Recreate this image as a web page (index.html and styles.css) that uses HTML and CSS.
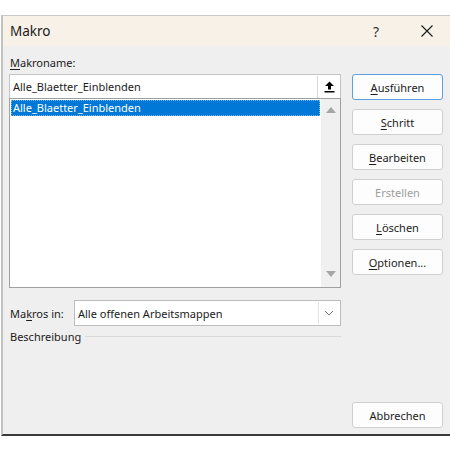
FILE: index.html
```html
<!DOCTYPE html>
<html lang="de">
<head>
<meta charset="utf-8">
<title>Makro</title>
<link rel="stylesheet" href="styles.css">
</head>
<body>
<div class="dialog">
  <div class="titlebar">
    <span class="title">Makro</span>
    <span class="help">?</span>
    <svg class="close" width="12" height="12" viewBox="0 0 12 12"><path d="M0.5 0.5 L11.5 11.5 M11.5 0.5 L0.5 11.5" stroke="#1a1a1a" stroke-width="1.1" fill="none"/></svg>
  </div>
  <div class="content">
    <div class="left">
      <div class="label"><u>M</u>akroname:</div>
      <div class="namebox">
        <span class="nametext">Alle_Blaetter_Einblenden</span>
        <span class="upbtn">
          <svg width="11" height="12" viewBox="0 0 11 12"><path d="M5.5 0.5 L10 5 L7 5 L7 8.5 L4 8.5 L4 5 L1 5 Z" fill="#000"/><rect x="0.5" y="10" width="10" height="1.5" fill="#000"/></svg>
        </span>
      </div>
      <div class="listbox">
        <div class="items">
          <div class="item selected">Alle_Blaetter_Einblenden</div>
        </div>
        <div class="scrollbar">
          <svg width="10" height="6" viewBox="0 0 10 6"><path d="M5 0 L10 6 L0 6 Z" fill="#a6a6a6"/></svg>
          <svg width="10" height="6" viewBox="0 0 10 6"><path d="M0 0 L10 0 L5 6 Z" fill="#a6a6a6"/></svg>
        </div>
      </div>
      <div class="inrow">
        <span class="inlabel">Ma<u>k</u>ros in:</span>
        <div class="select">
          <span class="seltext">Alle offenen Arbeitsmappen</span>
          <span class="selbtn">
            <svg width="10" height="6" viewBox="0 0 10 6"><path d="M1 1 L5 5 L9 1" stroke="#777" stroke-width="1" fill="none"/></svg>
          </span>
        </div>
      </div>
      <div class="desc">
        <span>Beschreibung</span>
        <span class="rule"></span>
      </div>
    </div>
    <div class="right">
      <button class="btn default"><u>A</u>usführen</button>
      <button class="btn"><u>S</u>chritt</button>
      <button class="btn"><u>B</u>earbeiten</button>
      <button class="btn disabled">Erstellen</button>
      <button class="btn"><u>L</u>öschen</button>
      <button class="btn"><u>O</u>ptionen...</button>
      <button class="btn cancel">Abbrechen</button>
    </div>
  </div>
</div>
</body>
</html>
```

FILE: styles.css
```css
html, body {
  margin: 0;
  padding: 0;
  background: #ffffff;
}
body {
  font-family: "Noto Sans", "Open Sans", sans-serif;
  font-size: 11px;
  color: #1b1b1b;
}
.dialog {
  margin-top: 15px;
  margin-left: 1px;
  width: 449px;
  height: 421px;
  box-sizing: border-box;
  border-top: 1px solid #c8c8c8;
  border-left: 2px solid #c2c2c2;
  border-bottom: 2px solid #3a3a3a;
  background: #efefef;
  display: flex;
  flex-direction: column;
}
.titlebar {
  height: 30px;
  background: #f8f1e8;
  display: flex;
  align-items: center;
  padding-left: 7px;
}
.title {
  font-size: 13.5px;
  flex: 1;
}
.help {
  font-size: 14px;
  color: #333;
  margin-right: 42px;
}
.close {
  margin-right: 17px;
}
.content {
  flex: 1;
  display: flex;
  gap: 11px;
  padding: 8px 5px 6px 6px;
}
.left {
  width: 332px;
  display: flex;
  flex-direction: column;
}
.label {
  height: 18px;
  line-height: 18px;
  padding-left: 1px;
  margin-bottom: 2px;
}
u { text-decoration-thickness: 1px; text-underline-offset: 2px; }
.namebox {
  height: 24px;
  box-sizing: border-box;
  border: 1px solid #c4c4c4;
  border-bottom: none;
  background: #fff;
  display: flex;
  align-items: center;
}
.nametext {
  flex: 1;
  padding-left: 3px;
}
.upbtn {
  width: 22px;
  height: 22px;
  border-left: 1px solid #d6d6d6;
  display: flex;
  align-items: center;
  justify-content: center;
}
.listbox {
  height: 190px;
  box-sizing: border-box;
  border: 1px solid #a0a0a0;
  background: #fff;
  display: flex;
}
.items {
  flex: 1;
  padding: 1px;
}
.item {
  height: 16px;
  line-height: 16px;
  padding-left: 2px;
}
.item.selected {
  background: #0078d7;
  color: #fff;
  outline: 1px dotted #7fb7e8;
  outline-offset: -1px;
}
.scrollbar {
  width: 19px;
  background: #f0f0f0;
  display: flex;
  flex-direction: column;
  justify-content: space-between;
  align-items: center;
  padding: 8px 0 10px;
}
.inrow {
  margin-top: 12px;
  display: flex;
  align-items: center;
  gap: 10px;
  height: 26px;
}
.inlabel {
  padding-left: 1px;
  width: 54px;
  white-space: nowrap;
}
.select {
  flex: 1;
  height: 26px;
  box-sizing: border-box;
  border: 1px solid #bdbdbd;
  background: #fff;
  display: flex;
  align-items: center;
}
.seltext {
  flex: 1;
  padding-left: 3px;
}
.selbtn {
  width: 20px;
  height: 22px;
  margin-right: 1px;
  border-left: 1px solid #e2e2e2;
  display: flex;
  align-items: center;
  justify-content: center;
}
.desc {
  margin-top: 2px;
  display: flex;
  align-items: center;
  gap: 4px;
  padding-left: 1px;
  height: 16px;
}
.rule {
  flex: 1;
  height: 1px;
  background: #d8d8d8;
}
.right {
  width: 91px;
  display: flex;
  flex-direction: column;
  gap: 9px;
  padding-top: 20px;
}
.btn {
  height: 26px;
  width: 91px;
  box-sizing: border-box;
  border: 1px solid #d0d0d0;
  border-radius: 3px;
  background: #fdfdfd;
  font-family: inherit;
  font-size: 11px;
  color: #1b1b1b;
  padding: 0;
}
.btn.default {
  border: 1px solid #5b9fdf;
}
.btn.disabled {
  color: #9d9d9d;
}
.btn.cancel {
  margin-top: auto;
}
```
